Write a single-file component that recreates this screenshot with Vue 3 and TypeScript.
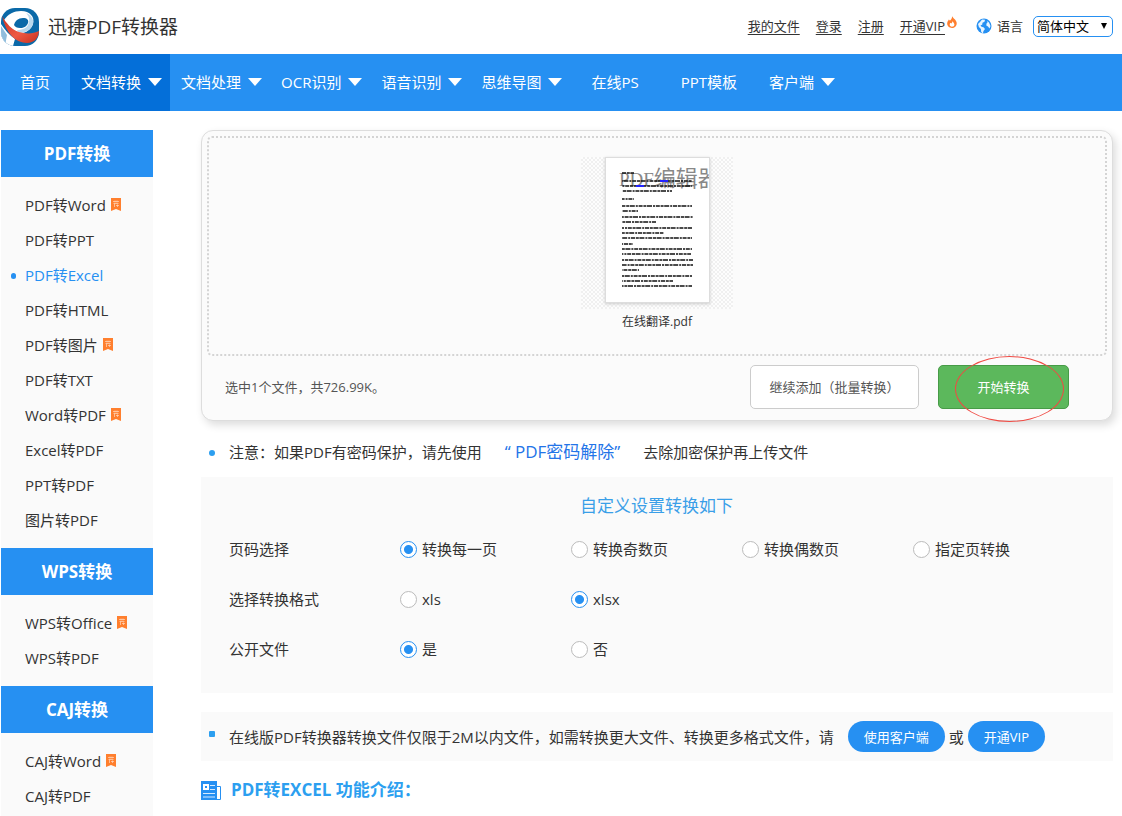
<script setup lang="ts">
import { ref } from 'vue'

interface NavItem { label: string; menu?: boolean; active?: boolean }
interface SideItem { label: string; hot?: boolean; active?: boolean }
interface SideGroup { title: string; items: SideItem[] }
interface OptionRow { name: string; label: string; options: string[] }

const nav: NavItem[] = [
  { label: '首页' },
  { label: '文档转换', menu: true, active: true },
  { label: '文档处理', menu: true },
  { label: 'OCR识别', menu: true },
  { label: '语音识别', menu: true },
  { label: '思维导图', menu: true },
  { label: '在线PS' },
  { label: 'PPT模板' },
  { label: '客户端', menu: true },
]

const groups: SideGroup[] = [
  {
    title: 'PDF转换',
    items: [
      { label: 'PDF转Word', hot: true },
      { label: 'PDF转PPT' },
      { label: 'PDF转Excel', active: true },
      { label: 'PDF转HTML' },
      { label: 'PDF转图片', hot: true },
      { label: 'PDF转TXT' },
      { label: 'Word转PDF', hot: true },
      { label: 'Excel转PDF' },
      { label: 'PPT转PDF' },
      { label: '图片转PDF' },
    ],
  },
  {
    title: 'WPS转换',
    items: [{ label: 'WPS转Office', hot: true }, { label: 'WPS转PDF' }],
  },
  {
    title: 'CAJ转换',
    items: [{ label: 'CAJ转Word', hot: true }, { label: 'CAJ转PDF' }],
  },
]

const rows: OptionRow[] = [
  { name: 'pages', label: '页码选择', options: ['转换每一页', '转换奇数页', '转换偶数页', '指定页转换'] },
  { name: 'format', label: '选择转换格式', options: ['xls', 'xlsx'] },
  { name: 'share', label: '公开文件', options: ['是', '否'] },
]

const picked = ref<Record<string, string>>({ pages: '转换每一页', format: 'xlsx', share: '是' })
const language = ref('简体中文')

// Vertical position and width of every text line on the page preview
const lines: [number, number][] = [
  [16, 12], [24, 70], [29, 70], [34, 50], [42, 12],
  [49, 70], [54, 16], [60, 71], [65, 34], [71, 70], [76, 42], [81, 70], [87, 11],
  [92, 70], [97, 69], [103, 71], [108, 71], [113, 17], [119, 70], [124, 51], [129, 70],
]
</script>

<template>
  <div class="page">
    <header class="top">
      <a class="brand" href="#">
        <svg class="logo" viewBox="0 0 38 38" aria-hidden="true">
          <defs>
            <clipPath id="logo-clip"><rect width="38" height="38" rx="14" /></clipPath>
            <linearGradient id="logo-red" x1="0" y1="0" x2="1" y2="1">
              <stop offset="0" stop-color="#c9311f" />
              <stop offset=".55" stop-color="#ee5a44" />
              <stop offset="1" stop-color="#c5301f" />
            </linearGradient>
          </defs>
          <g clip-path="url(#logo-clip)">
            <rect width="38" height="38" fill="#0a69a8" />
            <path d="M3 12C7 6 13 3 20 3c9 0 14 6 12 13-2 6-8 10-15 9L4 16Z" fill="#fff" />
            <path d="M25 5c5 2 8 6 7 11-2 6-8 9-14 9l-2-3c6 0 11-2 12-8 1-4-1-7-3-9Z" fill="#b9d9ee" />
            <path d="M13 17c1-4 4-7 9-7 4 0 6 2 5 5s-4 5-8 5c-3 0-5-1-6-3Z" fill="#0a69a8" />
            <path d="M0 16c4 6 8 11 14 15l-2 7H0Z" fill="#fff" />
            <path d="M0 18l6 9-2 11H0Z" fill="#8fbddd" />
            <path d="M1 8c4 7 10 14 17 16 7 2 14 2 20-1 0 7-5 12-12 12C15 35 5 26 1 8Z" fill="url(#logo-red)" />
          </g>
        </svg>
        <span>迅捷PDF转换器</span>
      </a>
      <div class="account">
        <a href="#">我的文件</a>
        <a href="#">登录</a>
        <a href="#">注册</a>
        <a href="#">开通VIP</a>
        <svg class="flame" viewBox="0 0 10 12" aria-hidden="true">
          <path d="M5.2 0c.3 2 3.3 3 4.3 6 .9 3.400-1.500 6-4.500 6S-.4 9.500.3 6.500C.7 5 1.500 4.500 1.800 3.500c.6.300.9.800 1 1.300C4 4 5 2.400 5.200 0Z" fill="#ff7f2e" />
          <path d="M5.400 5c.2 1 2 2 2 3.500S6.300 10.700 5 10.700 2.600 9.800 2.700 8.500c0-.8.5-1.300.8-1.700l.7.800C5 7 5.400 6 5.400 5Z" fill="#fff" />
        </svg>
        <svg class="globe" viewBox="0 0 16 16" aria-hidden="true">
          <circle cx="8" cy="8" r="7.500" fill="#2690f2" />
          <path d="M6 1.500l3 .3-.5 2-2 1-.3 2-1.700.5 1 1.500 2 .5 1.500 1.700-1.500 2-.6 2.500-1.700-1.500-.3-3-2-2L2 6l2-2Z" fill="#e8f4ff" />
          <path d="M11 3l2 1.500L14.500 8l-1 2.500-1.500-2-1.700-1 .2-2 1-1Z" fill="#e8f4ff" />
        </svg>
        <label for="lang">语言</label>
        <span class="picker">
          <select id="lang" v-model="language">
            <option>简体中文</option>
            <option>English</option>
          </select>
          <i aria-hidden="true"></i>
        </span>
      </div>
    </header>

    <nav class="nav">
      <a
        v-for="item in nav"
        :key="item.label"
        href="#"
        :class="{ menu: item.menu, active: item.active }"
      >{{ item.label }}</a>
    </nav>

    <div class="body">
      <aside class="side">
        <section v-for="group in groups" :key="group.title">
          <h2>{{ group.title }}</h2>
          <ul>
            <li v-for="item in group.items" :key="item.label">
              <a href="#" :class="{ active: item.active }">{{ item.label }}</a>
              <svg v-if="item.hot" class="hot" viewBox="0 0 10 13" aria-label="荐">
                <path d="M0 0h10v13L5 11 0 13Z" fill="#ff7f2e" />
                <path d="M2 3.500h6M4 2.500v2M6 2.500v2M2.500 5.500h5M3.500 5.500v3.500M5 7.500h3M6.500 6.500v2.500" stroke="#ffd9bd" stroke-width=".7" fill="none" />
              </svg>
            </li>
          </ul>
        </section>
      </aside>

      <main class="main">
        <section class="card">
          <div class="drop">
            <figure>
              <div class="thumb">
                <svg class="sheet" viewBox="0 0 105 146" aria-hidden="true">
                  <rect x=".5" y=".5" width="104" height="145" fill="#fff" stroke="#ddd" />
                  <svg width="104" height="146">
                    <text class="mark" x="14" y="29"><tspan class="latin">PDF</tspan>编辑器</text>
                  </svg>
                  <line
                    v-for="([y, w], i) in lines"
                    :key="y"
                    x1="17"
                    :x2="17 + w"
                    :y1="y"
                    :y2="y"
                    class="ink"
                    :stroke-dashoffset="i * 7"
                  />
                  <path d="M55 24h8M31 29h8" stroke="#22f" stroke-width="2" />
                </svg>
              </div>
              <figcaption>在线翻译.pdf</figcaption>
            </figure>
          </div>
          <div class="actions">
            <p>选中1个文件，共726.99K。</p>
            <button type="button" class="add">继续添加（批量转换）</button>
            <button type="button" class="start">开始转换</button>
          </div>
        </section>

        <p class="note">
          注意：如果PDF有密码保护，请先使用<a href="#">“ PDF密码解除”</a>去除加密保护再上传文件
        </p>

        <form class="settings">
          <h3>自定义设置转换如下</h3>
          <div v-for="row in rows" :key="row.name" class="row" role="radiogroup" :aria-label="row.label">
            <span>{{ row.label }}</span>
            <label v-for="option in row.options" :key="option">
              <input v-model="picked[row.name]" type="radio" :name="row.name" :value="option" />{{ option }}
            </label>
          </div>
        </form>

        <div class="limit">
          <span class="reason">在线版PDF转换器转换文件仅限于2M以内文件，如需转换更大文件、转换更多格式文件，请</span>
          <button type="button">使用客户端</button>
          <span>或</span>
          <button type="button">开通VIP</button>
        </div>

        <h2 class="intro">
          <svg viewBox="0 0 20 19" aria-hidden="true">
            <path d="M0 0h16v19H0Z" fill="#2690f2" />
            <path d="M16 5.500h3.500v13H16" fill="#fff" stroke="#2690f2" />
            <path d="M2 3h6v6H2Z" fill="#fff" />
            <path d="M4 5h2v2H4Z" fill="#2690f2" />
            <path d="M9 4.500h5M9 8.500h5M2 12.500h12M2 16h12" stroke="#d5eaff" stroke-width="1.200" />
          </svg>
          PDF转EXCEL 功能介绍：
        </h2>
      </main>
    </div>
  </div>
</template>

<style>
body {
  margin: 0;
  background: #fff;
}
</style>

<style scoped>
.page {
  font-family: "Open Sans", "Noto Sans CJK SC", sans-serif;
  font-size: 15px;
  line-height: 20px;
  color: #333;
  height: 100vh;
  overflow: hidden;
}
.page * {
  box-sizing: border-box;
}
a {
  color: inherit;
  text-decoration: none;
}
button,
select {
  font: inherit;
}
.top {
  display: flex;
  align-items: center;
  justify-content: space-between;
  height: 54px;
  padding: 0 9px 2px 1px;
}
.brand {
  display: flex;
  align-items: center;
  gap: 9px;
  padding-top: 2px;
  font-size: 19px;
  line-height: 24px;
}
.logo {
  width: 38px;
  height: 38px;
}
.account {
  display: flex;
  align-items: center;
  font-size: 13px;
}
.account a {
  margin-right: 16px;
  text-decoration: underline;
  text-underline-offset: 3px;
}
.account a:nth-of-type(4) {
  margin-right: 2px;
}
.flame {
  width: 10px;
  height: 12px;
  align-self: flex-start;
}
.globe {
  width: 16px;
  height: 16px;
  margin: 0 5px 0 19px;
}
.picker {
  position: relative;
  margin-left: 10px;
}
.picker select {
  display: block;
  appearance: none;
  width: 80px;
  height: 21px;
  padding: 0 3px;
  border: 1px solid #2690f2;
  border-radius: 5px;
  background: #fff;
  color: #000;
  line-height: 18px;
}
.picker i {
  position: absolute;
  top: 7px;
  right: 6px;
  border: 3px solid transparent;
  border-top: 6px solid #000;
  border-bottom: 0;
  pointer-events: none;
}
.nav {
  display: flex;
  height: 57px;
  background: #2690f2;
  color: #fff;
}
.nav a {
  display: flex;
  align-items: center;
  padding: 0 21px 2px;
}
.nav a:first-child {
  padding: 0 20px 2px;
}
.nav .menu {
  gap: 7px;
  padding: 0 8px 2px 11px;
}
.nav .menu::after {
  content: "";
  border: 7px solid transparent;
  border-top: 8px solid #fff;
  border-bottom: 0;
}
.nav .active {
  background: #046fd9;
}
.body {
  display: flex;
  align-items: flex-start;
  gap: 48px;
  padding: 19px 9px 0 1px;
}
.side {
  flex: none;
  width: 152px;
  background: #fafafa;
}
.side h2 {
  margin: 0;
  background: #2690f2;
  color: #fff;
  font-size: 17px;
  line-height: 47px;
  text-align: center;
}
.side ul {
  list-style: none;
  margin: 0;
  padding: 10px 0 11px;
}
.side li {
  display: flex;
  align-items: center;
  gap: 5px;
  height: 35px;
  padding-left: 24px;
}
.side a.active {
  position: relative;
  color: #2690f2;
}
.side a.active::before {
  content: "";
  position: absolute;
  top: 8px;
  left: -14px;
  width: 5px;
  height: 6px;
  border-radius: 3px;
  background: #2690f2;
}
.hot {
  width: 10px;
  height: 13px;
}
.main {
  flex: 1;
  min-width: 0;
}
.card {
  padding: 5px;
  border: 1px solid #ddd;
  border-radius: 12px;
  background: #fbfbfb;
  box-shadow: 3px 4px 8px #ddd;
}
.drop {
  height: 220px;
  padding-top: 19px;
  border: 2px dotted #d4d4d4;
  border-radius: 5px;
}
figure {
  margin: 0;
}
.thumb {
  width: 152px;
  height: 152px;
  margin: 0 auto;
  background: repeating-conic-gradient(#f0f0f0 0 25%, #fdfdfd 0 50%) 0 0 / 4px 4px;
}
.sheet {
  display: block;
  width: 105px;
  height: 146px;
  margin: 0 auto;
  box-shadow: 0 1px 3px #ccc;
}
.mark {
  font: 22px "Liberation Serif", "Noto Sans CJK SC", serif;
  fill: #888;
}
.latin {
  font-size: 19px;
}
.ink {
  stroke: #111;
  stroke-width: 1.600;
  stroke-dasharray: 4 .8 3 .6 5 1 2 .8;
}
figcaption {
  margin-top: 3px;
  font-size: 12px;
  text-align: center;
}
.actions {
  display: flex;
  align-items: center;
  gap: 19px;
  padding: 9px 38px 6px 18px;
}
.actions p {
  flex: 1;
  margin: 0;
  color: #555;
  font-size: 13px;
}
.actions button {
  position: relative;
  height: 44px;
  border: 1px solid #ccc;
  border-radius: 5px;
  background: #fff;
  color: #555;
  font-size: 13px;
}
.actions .add {
  width: 169px;
  padding: 0;
}
.actions .start {
  width: 131px;
  border-color: #479b47;
  background: #5cb85c;
  color: #fff;
}
.start::after {
  content: "";
  position: absolute;
  top: -10px;
  left: 16px;
  width: 107px;
  height: 64px;
  border: 1px solid #f04a43;
  border-radius: 50%;
}
.note,
.limit {
  position: relative;
  margin: 0;
  padding-left: 28px;
}
.note {
  padding-top: 19px;
  padding-bottom: 13px;
  line-height: 24px;
}
.note::before,
.limit::before {
  content: "";
  position: absolute;
  top: 29px;
  left: 8px;
  width: 6px;
  height: 6px;
  border-radius: 3px;
  background: #2c9ff0;
}
.note a {
  margin: 0 23px;
  color: #2374e8;
  font-size: 17px;
}
.settings {
  height: 216px;
  padding: 16px 29px 0 28px;
  background: #fafafa;
}
.settings h3 {
  margin: 0 0 5px;
  color: #3a9fe8;
  font-size: 17px;
  font-weight: 400;
  line-height: 26px;
  text-align: center;
}
.row {
  display: grid;
  grid-template-columns: repeat(5, 1fr);
  align-items: center;
  height: 50px;
}
.row label {
  display: flex;
  align-items: center;
  gap: 5px;
}
.row input {
  appearance: none;
  width: 17px;
  height: 17px;
  margin: 0;
  border: 1px solid #bbb;
  border-radius: 50%;
  background: #fff;
}
.row input:checked {
  border-color: #2690f2;
  background: radial-gradient(circle, #2690f2 0 4px, #fff 5px);
}
.limit {
  display: flex;
  align-items: center;
  gap: 4px;
  height: 49px;
  margin-top: 19px;
  background: #fafafa;
}
.limit::before {
  top: 19px;
  border-radius: 1px;
}
.reason {
  margin-right: 10px;
}
.limit button {
  height: 31px;
  padding: 0 16px;
  border: 0;
  border-radius: 16px;
  background: #2690f2;
  color: #fff;
  font-size: 13px;
}
.intro {
  display: flex;
  align-items: center;
  gap: 10px;
  margin: 17px 0 0;
  color: #2c9ff0;
  font-size: 17px;
  line-height: 24px;
}
.intro svg {
  width: 20px;
  height: 19px;
}
</style>
